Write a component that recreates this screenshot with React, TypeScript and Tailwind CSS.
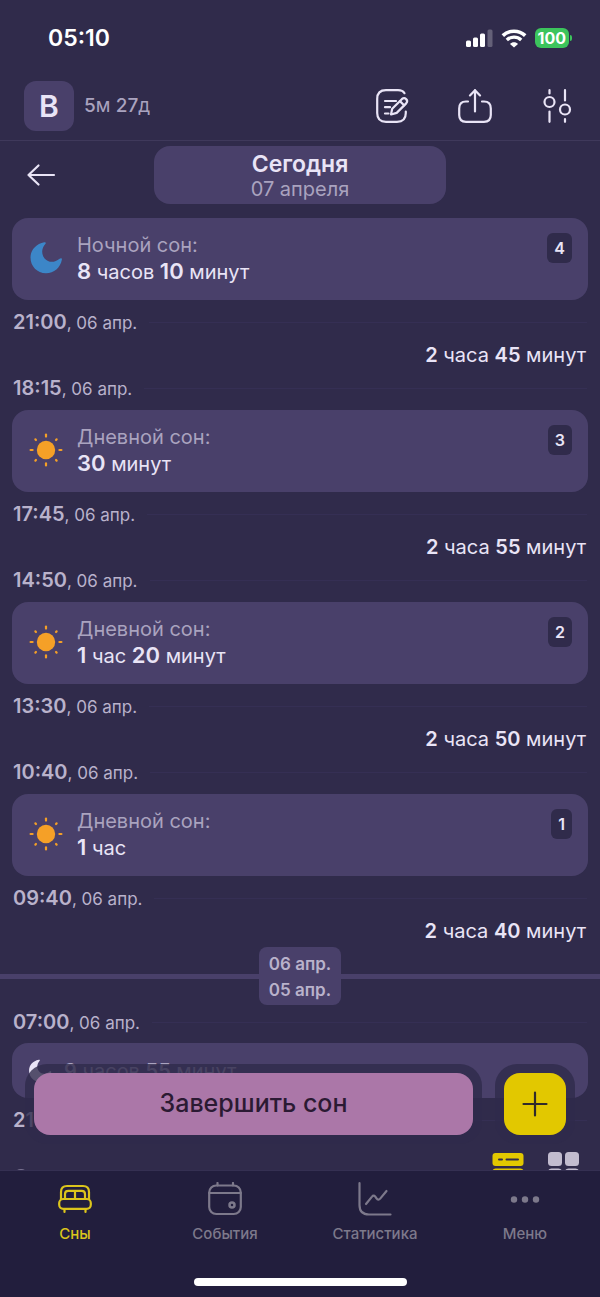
import { Fragment, ReactNode, useState } from "react";

interface Sleep {
  kind: "night" | "day";
  parts: [number, string][];
  index: number;
  start: string;
  awake: [number, string][];
  end?: string;
}

const sleeps: Sleep[] = [
  {
    kind: "night",
    parts: [[8, "часов"], [10, "минут"]],
    index: 4,
    start: "21:00",
    awake: [[2, "часа"], [45, "минут"]],
    end: "18:15",
  },
  {
    kind: "day",
    parts: [[30, "минут"]],
    index: 3,
    start: "17:45",
    awake: [[2, "часа"], [55, "минут"]],
    end: "14:50",
  },
  {
    kind: "day",
    parts: [[1, "час"], [20, "минут"]],
    index: 2,
    start: "13:30",
    awake: [[2, "часа"], [50, "минут"]],
    end: "10:40",
  },
  {
    kind: "day",
    parts: [[1, "час"]],
    index: 1,
    start: "09:40",
    awake: [[2, "часа"], [40, "минут"]],
  },
];

function Moon({ className }: { className: string }) {
  return (
    <svg viewBox="0 0 34 34" className={className} fill="currentColor" aria-hidden="true">
      <path d="M15.3 1.2C16.8.9 17.3 1.9 16.3 3C12.4 7.5 12.1 13.5 15.8 17.7C19.5 21.8 25.6 22 30.6 17.8C31.9 16.8 33.1 17.3 32.9 18.6C31.5 26.8 25 32.3 17 32.3C8.2 32.3 1.500 25.4 1.500 16.6C1.500 9 7 2.8 15.3 1.2Z" />
    </svg>
  );
}

function Sun({ className }: { className: string }) {
  const rays = [0, 45, 90, 135, 180, 225, 270, 315];
  return (
    <svg viewBox="0 0 34 34" className={className} aria-hidden="true">
      <circle cx="17" cy="17" r="9.2" fill="currentColor" />
      <g stroke="currentColor" strokeWidth="2.2" strokeLinecap="round">
        {rays.map((angle) => (
          <path
            key={angle}
            d={angle % 90 === 0 ? "M17 1.6V3.6" : "M17 2V2.8"}
            transform={`rotate(${angle} 17 17)`}
          />
        ))}
      </g>
    </svg>
  );
}

function Line({ children }: { children: ReactNode }) {
  return (
    <svg
      width="34"
      height="34"
      viewBox="0 0 34 34"
      fill="none"
      stroke="currentColor"
      strokeWidth="2.2"
      strokeLinecap="round"
      strokeLinejoin="round"
      aria-hidden="true"
    >
      {children}
    </svg>
  );
}

function Duration({ parts }: { parts: [number, string][] }) {
  return (
    <>
      {parts.map(([value, unit], i) => (
        <Fragment key={unit}>
          {i > 0 && " "}
          <b className="font-semibold">{value}</b> {unit}
        </Fragment>
      ))}
    </>
  );
}

function TimeRow({ time, className = "h-11" }: { time: string; className?: string }) {
  return (
    <div className={`flex items-center gap-3 px-[13px] text-[#b9b2cb] ${className}`}>
      <div className="text-[17px] whitespace-nowrap">
        <time className="text-xl font-semibold">{time}</time>, 06 апр.
      </div>
      <div className="h-px flex-1 bg-[#352f54]" />
    </div>
  );
}

function StatusBar() {
  return (
    <div className="flex h-[72px] items-center justify-between pt-1 pr-7 pl-12 text-white">
      <span className="text-[23px] font-semibold">05:10</span>
      <div className="flex items-center gap-2">
        <svg width="27" height="18" viewBox="0 0 27 18" fill="currentColor" aria-hidden="true">
          <rect x="0" y="11.5" width="5" height="6.5" rx="1.5" />
          <rect x="7" y="8.5" width="5" height="9.5" rx="1.5" />
          <rect x="14" y="4.5" width="5" height="13.5" rx="1.5" />
          <rect x="21.5" y="0.5" width="5" height="17.5" rx="1.5" opacity="0.25" />
        </svg>
        <svg width="26" height="19" viewBox="0 0 26 19" fill="none" stroke="currentColor" aria-hidden="true">
          <path d="M1.8 6.6C8 .7 18 .7 24.2 6.6" strokeWidth="3.6" />
          <path d="M5.8 11C10 7.2 16 7.2 20.2 11" strokeWidth="3.4" />
          <path d="M13 18.6L9 14.9C11 12.8 15 12.8 17 14.9Z" fill="currentColor" stroke="none" />
        </svg>
        <div className="flex items-center gap-px">
          <span className="rounded-md bg-[#3cc45c] px-[3px] text-base leading-5 font-bold">100</span>
          <span className="h-1.5 w-0.5 rounded-r-full bg-[#3cc45c]" />
        </div>
      </div>
    </div>
  );
}

function Header() {
  return (
    <header className="flex h-[69px] items-center justify-between border-b border-[#3f395b] pr-[26px] pl-6 text-[#e9e4f6]">
      <button className="flex items-center gap-[10px]">
        <span className="flex size-[50px] items-center justify-center rounded-xl bg-[#49406a] text-3xl font-semibold">
          В
        </span>
        <span className="text-[19px] text-[#aaa3bf]">
          <b className="font-medium">5</b>м <b className="font-medium">27</b>д
        </span>
      </button>
      <div className="flex items-center gap-12">
        <button aria-label="Заметка">
          <Line>
            <path d="M28.5 4.2C27.2 2 25.2 1.2 22 1.2H10C4 1.2 1.2 4 1.2 10V24C1.2 30 4 32.800 10 32.800H21C27 32.800 29.8 30 29.8 24V22.500" />
            <path d="M9 12H20M9 18.200H14M9 24.500H12.500" />
            <path d="M15 25.500L16.200 19.800L25.800 10.200C28.900 7.500 32.800 11.300 30.200 14.400L20.700 23.900Z" />
            <path d="M23.900 12.100L28.100 16.300" />
          </Line>
        </button>
        <button aria-label="Поделиться">
          <Line>
            <path d="M10 12.5H8C3.500 12.500 1.200 15 1.200 19.500V26C1.200 30.500 3.500 32.800 8 32.800H26C30.500 32.800 32.800 30.500 32.800 26V19.500C32.800 15 30.500 12.500 26 12.500H24" />
            <path d="M17 22.500V1.200M12 6.400L17 1.200L22 6.400" />
          </Line>
        </button>
        <button aria-label="Фильтры">
          <Line>
            <circle cx="9.5" cy="13" r="5" />
            <circle cx="25" cy="20.500" r="5" />
            <path d="M9.5 1.200V4.500M9.500 22.500V32.800M25 1.200V11.500M25 30V32.800" />
          </Line>
        </button>
      </div>
    </header>
  );
}

function DateBar() {
  return (
    <div className="grid grid-cols-[1fr_292px_1fr] items-center pt-[5px] pb-[14px]">
      <button aria-label="Назад" className="pl-6 text-[#e9e4f6]">
        <Line>
          <path d="M30 17H4.500M14.500 7.500L4.500 17L14.500 26.500" />
        </Line>
      </button>
      <button className="flex h-[58px] flex-col items-center justify-center rounded-2xl bg-[#49406a] pt-0.5">
        <span className="text-[23px] leading-[26px] font-semibold text-[#e9e4f6]">Сегодня</span>
        <span className="text-xl leading-6 text-[#aaa3bf]">07 апреля</span>
      </button>
    </div>
  );
}

function SleepCard({ sleep }: { sleep: Sleep }) {
  return (
    <article className="mx-3 flex h-[82px] items-center rounded-2xl bg-[#49406a] pr-4 pb-0.5 pl-[17px]">
      {sleep.kind === "night" ? (
        <Moon className="size-[34px] text-[#3c86c8]" />
      ) : (
        <Sun className="size-[34px] text-[#f5a027]" />
      )}
      <div className="flex-1 pl-[14px] text-xl leading-[26px]">
        <h2 className="text-[#aaa3bf]">{sleep.kind === "night" ? "Ночной сон:" : "Дневной сон:"}</h2>
        <p className="text-[#e9e4f6] [&_b]:text-[22px]">
          <Duration parts={sleep.parts} />
        </p>
      </div>
      <span className="mt-[15px] self-start rounded-md bg-[#302b4b] px-[7px] text-base leading-[30px] font-semibold text-[#e9e4f6]">
        {sleep.index}
      </span>
    </article>
  );
}

function DayDivider() {
  return (
    <div className="flex items-center pt-[5px] text-[17px] leading-[26px] font-semibold text-[#b9b2cb]">
      <div className="h-[5px] flex-1 bg-[#49406a]" />
      <div className="flex h-[58px] flex-col justify-center rounded-lg bg-[#49406a] px-[10px] pt-0.5">
        <span>06 апр.</span>
        <span>05 апр.</span>
      </div>
      <div className="h-[5px] flex-1 bg-[#49406a]" />
    </div>
  );
}

function ViewToggle() {
  return (
    <div className="flex items-start pt-2.5 pr-5 pl-3">
      <button aria-label="Справка" className="mt-[17px] ml-px size-4 rounded-full border-2 border-[#aaa3bf]/60" />
      <div className="ml-auto flex gap-6">
        <button aria-label="Список" className="text-[#e2c800]">
          <svg width="32" height="32" viewBox="0 0 32 32" fill="currentColor" aria-hidden="true">
            <rect x="0.5" y="1" width="31" height="13" rx="3" />
            <rect x="0.5" y="16.5" width="31" height="13" rx="3" />
            <path d="M7 7.5H10M14.5 7.5H26" stroke="#302b4b" strokeWidth="2" strokeLinecap="round" />
          </svg>
        </button>
        <button aria-label="Плитка" className="text-[#c2bccf]">
          <svg width="32" height="32" viewBox="0 0 32 32" fill="currentColor" aria-hidden="true">
            <rect x="0" y="0" width="14" height="14" rx="3.5" />
            <rect x="17" y="0" width="14" height="14" rx="3.5" />
            <rect x="0" y="16.5" width="14" height="14" rx="3.5" />
            <rect x="17" y="16.5" width="14" height="14" rx="3.5" />
          </svg>
        </button>
      </div>
    </div>
  );
}

function ActionBar() {
  return (
    <div className="absolute inset-x-0 bottom-[26px] flex gap-[13px] px-[25px]">
      <div className="flex-1 rounded-[22px] bg-[#302b4b]/80 p-[9px]">
        <button className="h-[62px] w-full rounded-2xl bg-[#ab77a8] text-[25px] font-medium text-[#2b1a33]">
          Завершить сон
        </button>
      </div>
      <div className="rounded-[22px] bg-[#302b4b]/80 p-[9px]">
        <button
          aria-label="Добавить"
          className="flex size-[62px] items-center justify-center rounded-2xl bg-[#e2c800] text-[#302b2b]"
        >
          <Line>
            <path d="M17 5.5V28.5M5.5 17H28.5" />
          </Line>
        </button>
      </div>
    </div>
  );
}

const tabs: { label: string; icon: ReactNode }[] = [
  {
    label: "Сны",
    icon: (
      <>
        <path d="M3 17V10C3 6 5 4 9 4H25C29 4 31 6 31 10V17" />
        <path d="M7 17V12C7 9.800 8 8.800 10.300 8.800H23.700C26 8.800 27 9.800 27 12V17M17 8.800V17" />
        <rect x="1.2" y="17" width="31.600" height="9.800" rx="4" />
        <path d="M6.500 27V30M27.500 27V30" />
      </>
    ),
  },
  {
    label: "События",
    icon: (
      <>
        <rect x="1.2" y="3.5" width="31.6" height="28.500" rx="7" />
        <path d="M1.200 11H32.800M9.500 1V3.500M25 1V3.500" />
        <circle cx="24" cy="23" r="2.500" strokeWidth="2.500" />
      </>
    ),
  },
  {
    label: "Статистика",
    icon: (
      <>
        <path d="M1.500 1.200V23C1.500 29.500 4.500 32.500 11 32.500H32.500" />
        <path d="M8 22L14 14.600C15 13.300 16.200 13.300 17.300 14.600L18.500 16.400C19.600 18 21 18 22.200 16.600L28.500 9" />
      </>
    ),
  },
  {
    label: "Меню",
    icon: (
      <g fill="currentColor" stroke="none">
        <circle cx="6" cy="17.5" r="3.2" />
        <circle cx="17" cy="17.5" r="3.2" />
        <circle cx="28" cy="17.5" r="3.2" />
      </g>
    ),
  },
];

function TabBar() {
  const [active, setActive] = useState("Сны");

  return (
    <nav className="border-t border-[#353052] bg-[#221e3d] py-[11px]">
      <div className="grid grid-cols-4">
        {tabs.map(({ label, icon }) => (
          <button
            key={label}
            onClick={() => setActive(label)}
            className={`flex flex-col items-center gap-2 ${active === label ? "text-[#dcc51c]" : "text-[#7d798b]"}`}
          >
            <Line>{icon}</Line>
            <span className="text-[15px] leading-5 font-medium">{label}</span>
          </button>
        ))}
      </div>
      <div className="mx-auto mt-[34px] h-2 w-[213px] rounded-full bg-white" />
    </nav>
  );
}

export default function App() {
  return (
    <div className="flex h-screen flex-col bg-[#302b4b] font-[Inter,sans-serif]">
      <StatusBar />
      <Header />
      <main className="relative min-h-0 flex-1 overflow-hidden">
        <DateBar />
        {sleeps.map((sleep) => (
          <section key={sleep.index}>
            <SleepCard sleep={sleep} />
            <TimeRow time={sleep.start} />
            <p className="px-[14px] text-right text-xl leading-[22px] text-[#e9e4f6]">
              <Duration parts={sleep.awake} />
            </p>
            {sleep.end && <TimeRow time={sleep.end} />}
          </section>
        ))}
        <DayDivider />
        <TimeRow time="07:00" className="h-[38px] pb-1" />
        <article className="mx-3 flex h-[55px] items-center gap-3 rounded-2xl bg-[#49406a] pl-4 text-xl text-[#aaa3bf]">
          <Moon className="size-6 text-[#e9e4f6]" />
          <p>
            <Duration parts={[[9, "часов"], [55, "минут"]]} />
          </p>
        </article>
        <TimeRow time="21:05" />
        <ViewToggle />
        <ActionBar />
      </main>
      <TabBar />
    </div>
  );
}
